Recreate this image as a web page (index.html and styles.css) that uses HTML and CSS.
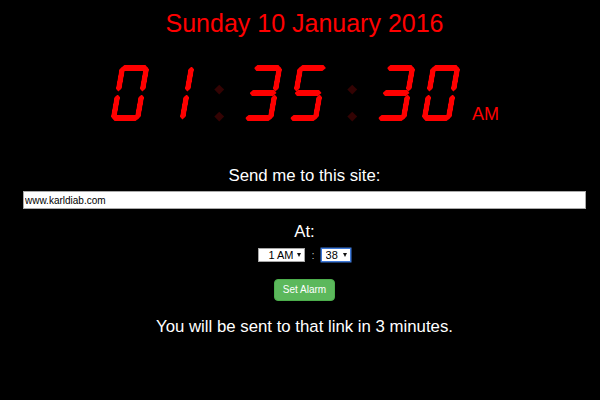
FILE: index.html
```html
<!DOCTYPE html>
<html lang="en">
<head>
<meta charset="utf-8">
<title>Alarm Clock</title>
<link rel="stylesheet" href="styles.css">
</head>
<body>
<main class="page">
  <h1 class="date">Sunday 10 January 2016</h1>

  <div class="clock" role="timer" aria-label="01:35:30 AM">
    <div class="group">
      <div class="digit n0"><span class="seg a"></span><span class="seg b"></span><span class="seg c"></span><span class="seg d"></span><span class="seg e"></span><span class="seg f"></span><span class="seg g"></span></div>
      <div class="digit n1"><span class="seg a"></span><span class="seg b"></span><span class="seg c"></span><span class="seg d"></span><span class="seg e"></span><span class="seg f"></span><span class="seg g"></span></div>
    </div>
    <div class="colon"><i></i><i></i></div>
    <div class="group">
      <div class="digit n3"><span class="seg a"></span><span class="seg b"></span><span class="seg c"></span><span class="seg d"></span><span class="seg e"></span><span class="seg f"></span><span class="seg g"></span></div>
      <div class="digit n5"><span class="seg a"></span><span class="seg b"></span><span class="seg c"></span><span class="seg d"></span><span class="seg e"></span><span class="seg f"></span><span class="seg g"></span></div>
    </div>
    <div class="colon"><i></i><i></i></div>
    <div class="group">
      <div class="digit n3"><span class="seg a"></span><span class="seg b"></span><span class="seg c"></span><span class="seg d"></span><span class="seg e"></span><span class="seg f"></span><span class="seg g"></span></div>
      <div class="digit n0"><span class="seg a"></span><span class="seg b"></span><span class="seg c"></span><span class="seg d"></span><span class="seg e"></span><span class="seg f"></span><span class="seg g"></span></div>
    </div>
    <span class="ampm">AM</span>
  </div>

  <p class="label">Send me to this site:</p>
  <input class="url" type="text" value="www.karldiab.com">

  <p class="label at">At:</p>
  <div class="time-row">
    <span class="select hour">
      <select><option>1 AM</option></select>
    </span>
    <span class="sep">:</span>
    <span class="select minute focused">
      <select><option>38</option></select>
    </span>
  </div>

  <div class="actions">
    <button class="btn" type="button">Set Alarm</button>
  </div>

  <p class="label message">You will be sent to that link in 3 minutes.</p>
</main>
</body>
</html>
```

FILE: styles.css
```css
html, body {
  margin: 0;
  padding: 0;
  background: #000;
}

body {
  font-family: "Liberation Sans", Arial, sans-serif;
  color: #fff;
}

.page {
  padding: 8px 14px 0 23px;
  text-align: center;
}

.date {
  margin: 0;
  font-size: 25px;
  line-height: 30px;
  font-weight: normal;
  color: #ff0000;
}

/* ---- seven segment clock ---- */
.clock {
  margin-top: 27px;
  height: 56px;
  display: flex;
  justify-content: center;
  padding-left: 5px;
}

.group {
  display: flex;
  gap: 15px;
}

.digit {
  display: grid;
  grid-template-columns: 6px 18px 6px;
  grid-template-rows: 6px 19px 6px 19px 6px;
  width: 30px;
  height: 56px;
  transform: skewX(-10deg);
}

.seg {
  background: #ff0000;
  visibility: hidden;
}

.seg.a, .seg.g, .seg.d {
  grid-column: 1 / 4;
  margin: 0 1.5px;
  clip-path: polygon(0 50%, 3px 0, calc(100% - 3px) 0, 100% 50%, calc(100% - 3px) 100%, 3px 100%);
}
.seg.a { grid-row: 1; }
.seg.g { grid-row: 3; }
.seg.d { grid-row: 5; }

.seg.b, .seg.c, .seg.e, .seg.f {
  clip-path: polygon(50% 0, 100% 3px, 100% calc(100% - 3px), 50% 100%, 0 calc(100% - 3px), 0 3px);
}
.seg.f { grid-column: 1; grid-row: 1 / 4; margin: 1.5px 0 4.5px; }
.seg.b { grid-column: 3; grid-row: 1 / 4; margin: 1.5px 0 4.5px; }
.seg.e { grid-column: 1; grid-row: 3 / 6; margin: 4.5px 0 1.5px; }
.seg.c { grid-column: 3; grid-row: 3 / 6; margin: 4.5px 0 1.5px; }

.n0 .a, .n0 .b, .n0 .c, .n0 .d, .n0 .e, .n0 .f,
.n1 .b, .n1 .c,
.n2 .a, .n2 .b, .n2 .g, .n2 .e, .n2 .d,
.n3 .a, .n3 .b, .n3 .c, .n3 .d, .n3 .g,
.n4 .f, .n4 .g, .n4 .b, .n4 .c,
.n5 .a, .n5 .f, .n5 .g, .n5 .c, .n5 .d,
.n6 .a, .n6 .f, .n6 .g, .n6 .c, .n6 .d, .n6 .e,
.n7 .a, .n7 .b, .n7 .c,
.n8 .seg,
.n9 .a, .n9 .b, .n9 .c, .n9 .d, .n9 .f, .n9 .g {
  visibility: visible;
}

.colon {
  display: flex;
  flex-direction: column;
  align-items: center;
  gap: 19px;
  padding-top: 20px;
  width: 8px;
  margin: 0 25px;
}

.colon i {
  display: block;
  width: 6.5px;
  height: 6.5px;
  margin: 0.75px;
  background: #330303;
  transform: rotate(45deg);
}

.ampm {
  align-self: flex-end;
  margin: 0 0 -2px 16px;
  font-size: 18px;
  line-height: 18px;
  color: #ff0000;
}

/* ---- form ---- */
.label {
  margin: 45px 0 0;
  font-size: 16.8px;
  line-height: 20px;
  color: #fff;
}

.url {
  display: block;
  box-sizing: border-box;
  width: 100%;
  height: 18px;
  margin-top: 5px;
  padding: 0 1px;
  border: 1px solid #a9a9a9;
  background: #fff;
  font-family: "Liberation Sans", Arial, sans-serif;
  font-size: 10px;
  color: #000;
  outline: none;
}

.label.at {
  margin-top: 13px;
}

.time-row {
  margin-top: 6px;
  height: 14px;
  display: flex;
  justify-content: center;
  align-items: center;
}

.select {
  position: relative;
  display: inline-flex;
  box-sizing: border-box;
  height: 14px;
  background: #fff;
  border: 1px solid #a6a6a6;
}

.select.hour { width: 47px; }
.select.minute { width: 30px; }
.select.focused { border-color: #3d78d8; box-shadow: 0 0 0 0.5px #3d78d8; }

.select select {
  appearance: none;
  -webkit-appearance: none;
  border: 0;
  margin: 0;
  background: transparent;
  width: 100%;
  height: 12px;
  padding: 0 0 0 9px;
  font-family: "Liberation Sans", Arial, sans-serif;
  font-size: 11px;
  line-height: 12px;
  color: #000;
  outline: none;
}

.select.minute select { padding-left: 4px; }

.select::after {
  content: "";
  position: absolute;
  right: 3px;
  top: 4px;
  border-left: 2.5px solid transparent;
  border-right: 2.5px solid transparent;
  border-top: 4px solid #111;
}

.sep {
  margin: 0 6px;
  font-size: 11px;
  color: #bbb;
}

.actions {
  margin-top: 17px;
}

.btn {
  box-sizing: border-box;
  height: 22px;
  padding: 0 8px;
  border: 1px solid #4cae4c;
  border-radius: 4px;
  background: #5cb85c;
  color: #fff;
  font-family: "Liberation Sans", Arial, sans-serif;
  font-size: 10px;
  line-height: 20px;
  cursor: pointer;
}

.label.message {
  margin-top: 16px;
}
```
